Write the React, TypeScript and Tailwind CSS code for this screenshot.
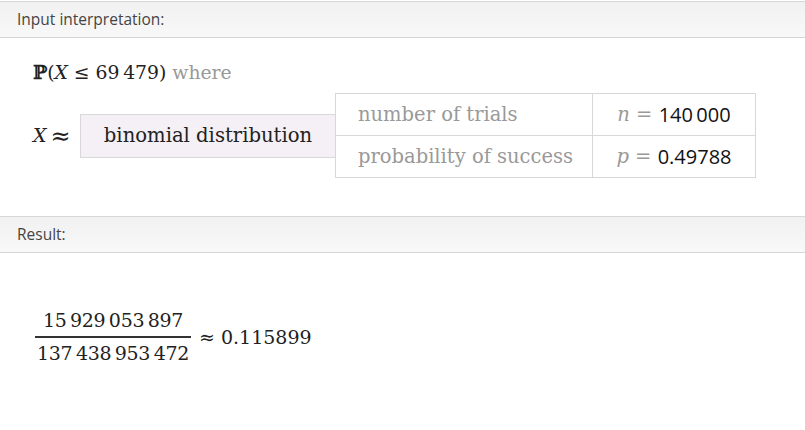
import React from "react";

const serif = { fontFamily: '"DejaVu Serif", "Liberation Serif", serif' };

function Header({ label }: { label: string }) {
  return (
    <div className="h-[37px] border-y border-[#d6d6d6] bg-gradient-to-b from-[#f1f1f1] to-[#f8f8f8] flex items-center pl-[17px]">
      <span className="text-[15.5px] text-[#444] font-['Open_Sans',sans-serif]">{label}</span>
    </div>
  );
}

export default function App() {
  return (
    <div className="w-[805px] h-[430px] bg-white pt-[1px] overflow-hidden">
      <Header label="Input interpretation:" />
      <div className="pl-[33px] h-[178px] flex flex-col">
        <div className="mt-[22px] text-[18.8px] leading-[24px] text-[#222]" style={serif}>
          <span className="font-bold">ℙ</span>(<i>X</i> ≤ 69{"\u2009"}479) <span className="text-[#999]">where</span>
        </div>
        <div className="mt-[8px] flex items-center">
          <span className="text-[19px] text-[#222] w-[47px] flex items-center" style={serif}>
            <i>X</i>
            <span className="ml-[4px] text-[24px] leading-none">≈</span>
          </span>
          <div className="w-[255px] h-[44px] border border-[#d8d8d8] border-r-0 bg-[#f5f0f5] flex items-center justify-center text-[19.6px] text-[#222]" style={serif}>
            binomial distribution
          </div>
          <div className="border border-[#d8d8d8] text-[19.5px]" style={serif}>
            <div className="flex h-[42px] border-b border-[#d8d8d8]">
              <div className="w-[257px] border-r border-[#d8d8d8] pl-[22px] flex items-center text-[#999]">number of trials</div>
              <div className="w-[162px] flex items-center justify-center text-[#999]">
                <i>n</i>&nbsp;=&nbsp;<span className="text-[#111] font-['Open_Sans',sans-serif] text-[20px]">140{"\u2009"}000</span>
              </div>
            </div>
            <div className="flex h-[41px]">
              <div className="w-[257px] border-r border-[#d8d8d8] pl-[22px] flex items-center text-[#999]">probability of success</div>
              <div className="w-[162px] flex items-center justify-center text-[#999]">
                <i>p</i>&nbsp;=&nbsp;<span className="text-[#111] font-['Open_Sans',sans-serif] text-[20px]">0.49788</span>
              </div>
            </div>
          </div>
        </div>
      </div>
      <Header label="Result:" />
      <div className="pl-[35px] pt-[55px] flex items-center text-[#222]" style={serif}>
        <div className="flex flex-col items-center">
          <span className="text-[19px] leading-[25px] px-[4px] tracking-[-0.3px]">15{"\u2009"}929{"\u2009"}053{"\u2009"}897</span>
          <span className="w-full h-[2px] bg-[#333] my-[3px]"></span>
          <span className="text-[19px] leading-[25px] px-[2px] tracking-[-0.3px]">137{"\u2009"}438{"\u2009"}953{"\u2009"}472</span>
        </div>
        <span className="ml-[8px] text-[19px]">≈ 0.115899</span>
      </div>
    </div>
  );
}
